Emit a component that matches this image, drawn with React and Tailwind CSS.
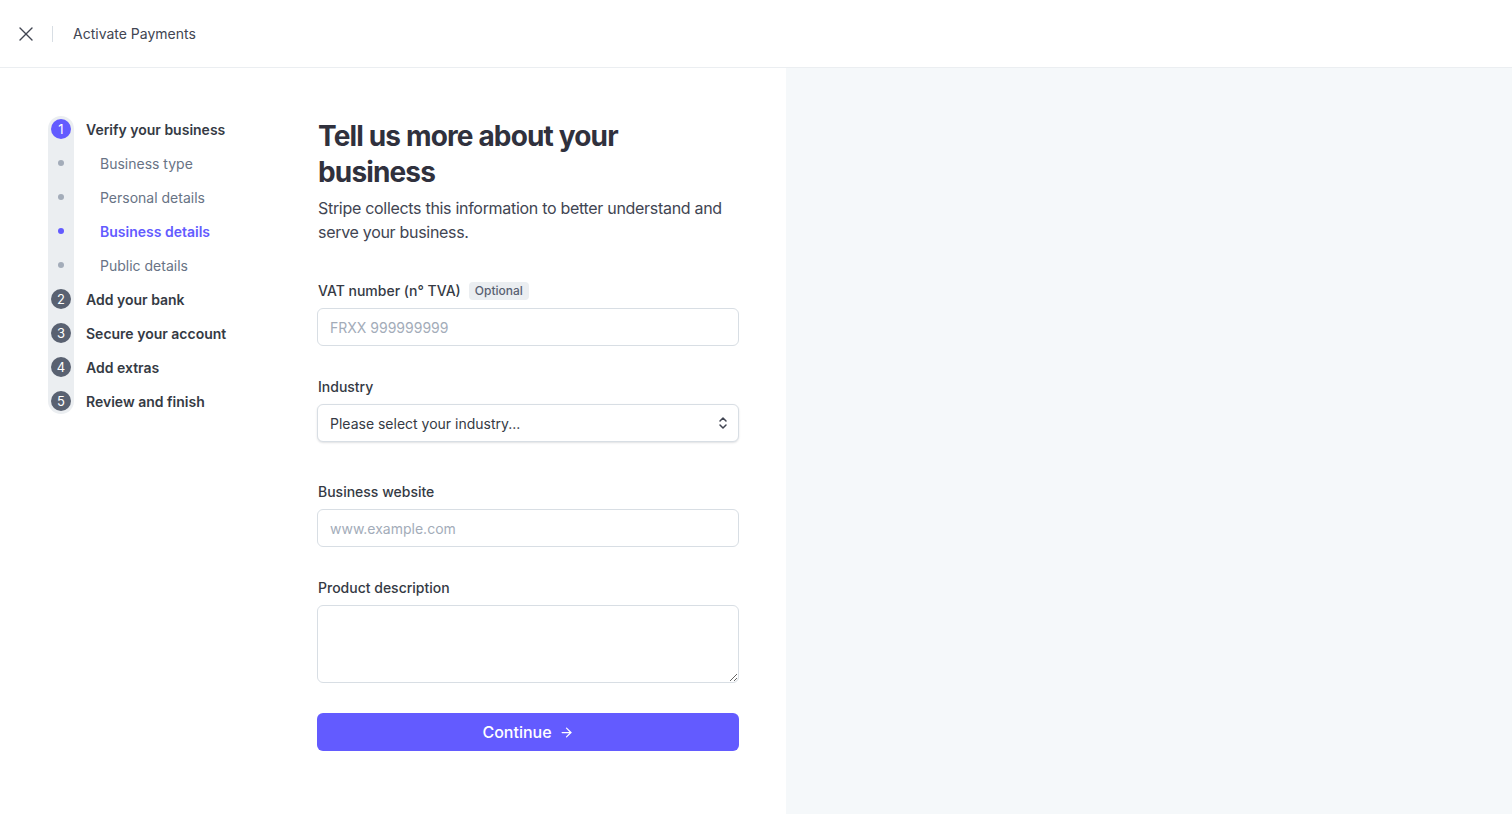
import { X, ArrowRight } from 'lucide-react'

const steps = [
    { kind: 'step', label: 'Verify your business', num: 1, current: true },
    { kind: 'sub', label: 'Business type' },
    { kind: 'sub', label: 'Personal details' },
    { kind: 'sub', label: 'Business details', active: true },
    { kind: 'sub', label: 'Public details' },
    { kind: 'step', label: 'Add your bank', num: 2 },
    { kind: 'step', label: 'Secure your account', num: 3 },
    { kind: 'step', label: 'Add extras', num: 4 },
    { kind: 'step', label: 'Review and finish', num: 5 },
]

function StepMarker({ item }) {
    if (item.kind === 'step') {
        return (
            <div
                className={`w-5 h-5 rounded-full flex items-center justify-center text-[13px] leading-none text-white ${
                    item.current ? 'bg-[#635bff]' : 'bg-[#596171]'
                }`}
            >
                {item.num}
            </div>
        )
    }
    return (
        <div className="w-5 h-5 flex items-center justify-center">
            <div className={`w-[6px] h-[6px] rounded-full ${item.active ? 'bg-[#635bff]' : 'bg-[#a3acb9]'}`} />
        </div>
    )
}

function Stepper() {
    return (
        <div className="flex items-start w-[317px] shrink-0 pl-12">
            <div className="mt-1 w-[26px] flex flex-col items-center gap-[14px] py-[3px] rounded-full bg-[#ebeef1]">
                {steps.map((s) => (
                    <StepMarker key={s.label} item={s} />
                ))}
            </div>
            <div className="flex flex-col">
                {steps.map((s) => (
                    <div
                        key={s.label}
                        className={`h-[34px] flex items-center text-[14px] ${
                            s.kind === 'step'
                                ? 'pl-3 font-semibold text-[#353a44]'
                                : s.active
                                ? 'pl-[26px] font-semibold text-[#635bff]'
                                : 'pl-[26px] text-[#687385]'
                        }`}
                    >
                        {s.label}
                    </div>
                ))}
            </div>
        </div>
    )
}

function Label({ children }) {
    return <label className="block pl-px text-[14px] font-medium text-[#353a44] leading-5 mb-[7px]">{children}</label>
}

const inputClass =
    'w-full h-[38px] px-3 rounded-md border border-[#d8dee4] bg-white text-[14px] text-[#353a44] placeholder-[#a3acb9] focus:outline-none'

function ChevronUpDown() {
    return (
        <svg width="12" height="14" viewBox="0 0 12 14" fill="none" stroke="#414552" strokeWidth="1.5" strokeLinecap="round" strokeLinejoin="round">
            <path d="M3 5l3-3 3 3" />
            <path d="M3 9l3 3 3-3" />
        </svg>
    )
}

export default function App() {
    return (
        <div className="min-h-screen flex flex-col bg-white" style={{ fontFamily: 'Inter, "Noto Sans", sans-serif' }}>
            <header className="h-[68px] shrink-0 flex items-center border-b border-[#ebeef1]">
                <button className="ml-[14px] w-6 h-6 flex items-center justify-center text-[#414552]">
                    <X size={24} strokeWidth={1.4} className="shrink-0" />
                </button>
                <div className="ml-[14px] w-px h-4 bg-[#d8dee4]" />
                <span className="ml-5 text-[14px] text-[#414552]">Activate Payments</span>
            </header>

            <div className="flex flex-1">
                <main className="w-[786px] shrink-0 flex pt-11 pb-16">
                    <Stepper />
                    <div className="w-[422px] flex flex-col">
                        <h1 className="mt-[6px] pl-px text-[28px] leading-9 font-bold text-[#30313d] tracking-[-0.85px]">
                            Tell us more about your business
                        </h1>
                        <p className="mt-[6px] pl-px text-[16px] leading-6 text-[#414552] tracking-[-0.3px]">
                            Stripe collects this information to better understand and serve your business.
                        </p>

                        <div className="mt-[37px]">
                            <div className="flex items-center gap-2 mb-[7px] pl-px">
                                <span className="text-[14px] font-medium text-[#353a44] leading-5">VAT number (n° TVA)</span>
                                <span className="px-[6px] py-[1px] rounded bg-[#ebeef1] text-[12px] font-medium text-[#596171] leading-4">
                                    Optional
                                </span>
                            </div>
                            <input className={inputClass} placeholder="FRXX 999999999" />
                        </div>

                        <div className="mt-[31px]">
                            <Label>Industry</Label>
                            <div className="relative">
                                <select
                                    className="w-full h-[38px] pl-3 pr-8 rounded-md border border-[#d8dee4] bg-white text-[14px] text-[#353a44] appearance-none shadow-[0_1px_2px_rgba(64,68,82,0.16)] focus:outline-none"
                                    defaultValue=""
                                >
                                    <option value="">Please select your industry...</option>
                                </select>
                                <div className="pointer-events-none absolute right-[10px] top-1/2 -translate-y-1/2">
                                    <ChevronUpDown />
                                </div>
                            </div>
                        </div>

                        <div className="mt-[40px]">
                            <Label>Business website</Label>
                            <input className={inputClass} placeholder="www.example.com" />
                        </div>

                        <div className="mt-[31px]">
                            <Label>Product description</Label>
                            <textarea className="block w-full h-[78px] px-3 py-2 rounded-md border border-[#d8dee4] bg-white text-[14px] text-[#353a44] focus:outline-none" />
                        </div>

                        <button className="mt-[30px] w-full h-[38px] rounded-md bg-[#635bff] text-white text-[16px] font-medium flex items-center justify-center gap-[7px]">
                            Continue
                            <ArrowRight size={15} strokeWidth={2} />
                        </button>
                    </div>
                </main>
                <aside className="flex-1 bg-[#f5f8fa]" />
            </div>
        </div>
    )
}
